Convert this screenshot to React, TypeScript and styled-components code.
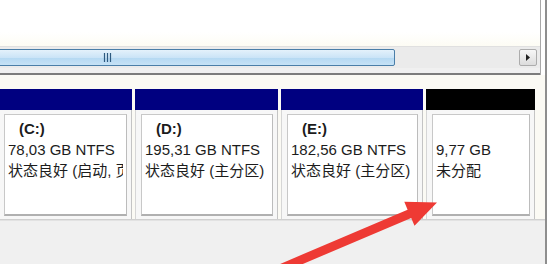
import styled, { createGlobalStyle } from 'styled-components'

interface Part {
  id: number;
  label?: string;
  size: string;
  status: string;
  width: number;
  unallocated?: boolean;
}

const parts: Part[] = [
  { id: 1, label: '(C:)', size: '78,03 GB NTFS', status: '状态良好 (启动, 页', width: 134 },
  { id: 2, label: '(D:)', size: '195,31 GB NTFS', status: '状态良好 (主分区)', width: 143 },
  { id: 3, label: '(E:)', size: '182,56 GB NTFS', status: '状态良好 (主分区)', width: 142 },
  { id: 4, size: '9,77 GB', status: '未分配', width: 109, unallocated: true },
]

const GlobalStyle = createGlobalStyle`
  html, body {
    margin: 0;
    padding: 0;
    overflow: hidden;
    background: #ffffff;
  }
`

const App = () => {
  return (
    <>
      <GlobalStyle />
      <Window>
        <Main>
          <Upper>
            <ListArea />
            <HScroll>
              <Thumb>
                <svg width="10" height="9" viewBox="0 0 10 9">
                  <g stroke="#2d5a80" strokeWidth="1.2">
                    <line x1="1.5" y1="0" x2="1.5" y2="9" />
                    <line x1="4.5" y1="0" x2="4.5" y2="9" />
                    <line x1="7.5" y1="0" x2="7.5" y2="9" />
                  </g>
                </svg>
              </Thumb>
              <Track />
              <ArrowButton>
                <svg width="5" height="7" viewBox="0 0 5 7">
                  <polygon points="0,0 4,3.5 0,7" fill="#222" />
                </svg>
              </ArrowButton>
            </HScroll>
            <Splitter />
          </Upper>
          <DiskArea>
            <Columns>
              {parts.map(p => (
                <Column key={p.id} $w={p.width}>
                  <Header $unallocated={!!p.unallocated} />
                  <Body>
                    <Box>
                      <Line $bold>{p.label ?? '\u00a0'}</Line>
                      <Line>{p.size}</Line>
                      <Line>{p.status}</Line>
                    </Box>
                  </Body>
                </Column>
              ))}
            </Columns>
          </DiskArea>
          <Footer />
        </Main>
        <Edge />
        <Arrow width="550" height="264" viewBox="0 0 550 264">
          <polygon
            points="280.2,263.9 407.6,209.7 404.3,201.8 437,202.5 414.5,225.8 411.2,217.9 283.8,272.1"
            fill="#ee3a34"
          />
        </Arrow>
      </Window>
    </>
  )
}

const Window = styled.div`
  position: relative;
  width: 550px;
  height: 264px;
  display: flex;
  overflow: hidden;
  font-family: "Liberation Sans", "Noto Sans CJK SC", sans-serif;
`

const Main = styled.div`
  width: 545px;
  display: flex;
  flex-direction: column;
`

const Edge = styled.div`
  width: 2px;
  background: #8e8e8e;
  border-right: 3px solid #ffffff;
`

const Upper = styled.div`
  display: flex;
  flex-direction: column;
  border-right: 1px solid #a8a8a8;
  margin-right: 4px;
`

const ListArea = styled.div`
  height: 46px;
  background: linear-gradient(#ffffff 70%, #fdfcf4);
`

const HScroll = styled.div`
  height: 22px;
  display: flex;
  align-items: center;
  background: #ebebeb;
  border-top: 1px solid #e0e0e0;
  box-sizing: border-box;
  padding-right: 3px;
`

const Thumb = styled.div`
  width: 399px;
  height: 17px;
  margin-left: -4px;
  box-sizing: border-box;
  border: 1px solid #4a7ea8;
  border-radius: 2px;
  background: linear-gradient(#e4f1fb, #cbe4f7 50%, #b4d8f2 51%, #c6e2f6);
  display: flex;
  align-items: center;
  justify-content: center;
  padding-right: 176px;
`

const Track = styled.div`
  flex: 1;
`

const ArrowButton = styled.div`
  width: 18px;
  height: 17px;
  box-sizing: border-box;
  border: 1px solid #acacac;
  border-radius: 2px;
  background: linear-gradient(#f7f7f7, #dcdcdc);
  display: flex;
  align-items: center;
  justify-content: center;
`

const Splitter = styled.div`
  height: 5px;
  background: #f0f0f0;
  border-bottom: 2px solid #7c7c7c;
`

const DiskArea = styled.div`
  background: #fbfaf4;
  padding-top: 14px;
  border-bottom: 1px solid #d0d0d0;
`

const Columns = styled.div`
  display: flex;
  gap: 3px;
  margin-left: -2px;
`

const Column = styled.div<{ $w: number }>`
  width: ${p => p.$w}px;
  display: flex;
  flex-direction: column;
  background: #ffffff;
`

const Header = styled.div<{ $unallocated: boolean }>`
  height: 21px;
  background: ${p => (p.$unallocated ? '#000000' : '#000080')};
`

const Body = styled.div`
  height: 109px;
  box-sizing: border-box;
  padding: 4px 4px 3px 5px;
  background: #f7f7f7;
  border-left: 1px solid #d6d6d6;
  border-right: 1px solid #c4c4c4;
`

const Box = styled.div`
  height: 100%;
  box-sizing: border-box;
  background: #ffffff;
  border: 1px solid #c8c8c8;
  border-right-color: #bcbcbc;
  border-bottom: 2px solid #b0b0b0;
  padding: 3px 3px 0 3px;
  overflow: hidden;
`

const Line = styled.div<{ $bold?: boolean }>`
  height: 21px;
  line-height: 21px;
  font-size: 15px;
  color: #1c1c1c;
  white-space: nowrap;
  overflow: hidden;
  font-weight: ${p => (p.$bold ? 700 : 400)};
  padding-left: ${p => (p.$bold ? 11 : 0)}px;
`

const Footer = styled.div`
  flex: 1;
  background: #f0f0f0;
  border-top: 1px solid #e2e2e2;
`

const Arrow = styled.svg`
  position: absolute;
  top: 0;
  left: 0;
  pointer-events: none;
`

export default App
